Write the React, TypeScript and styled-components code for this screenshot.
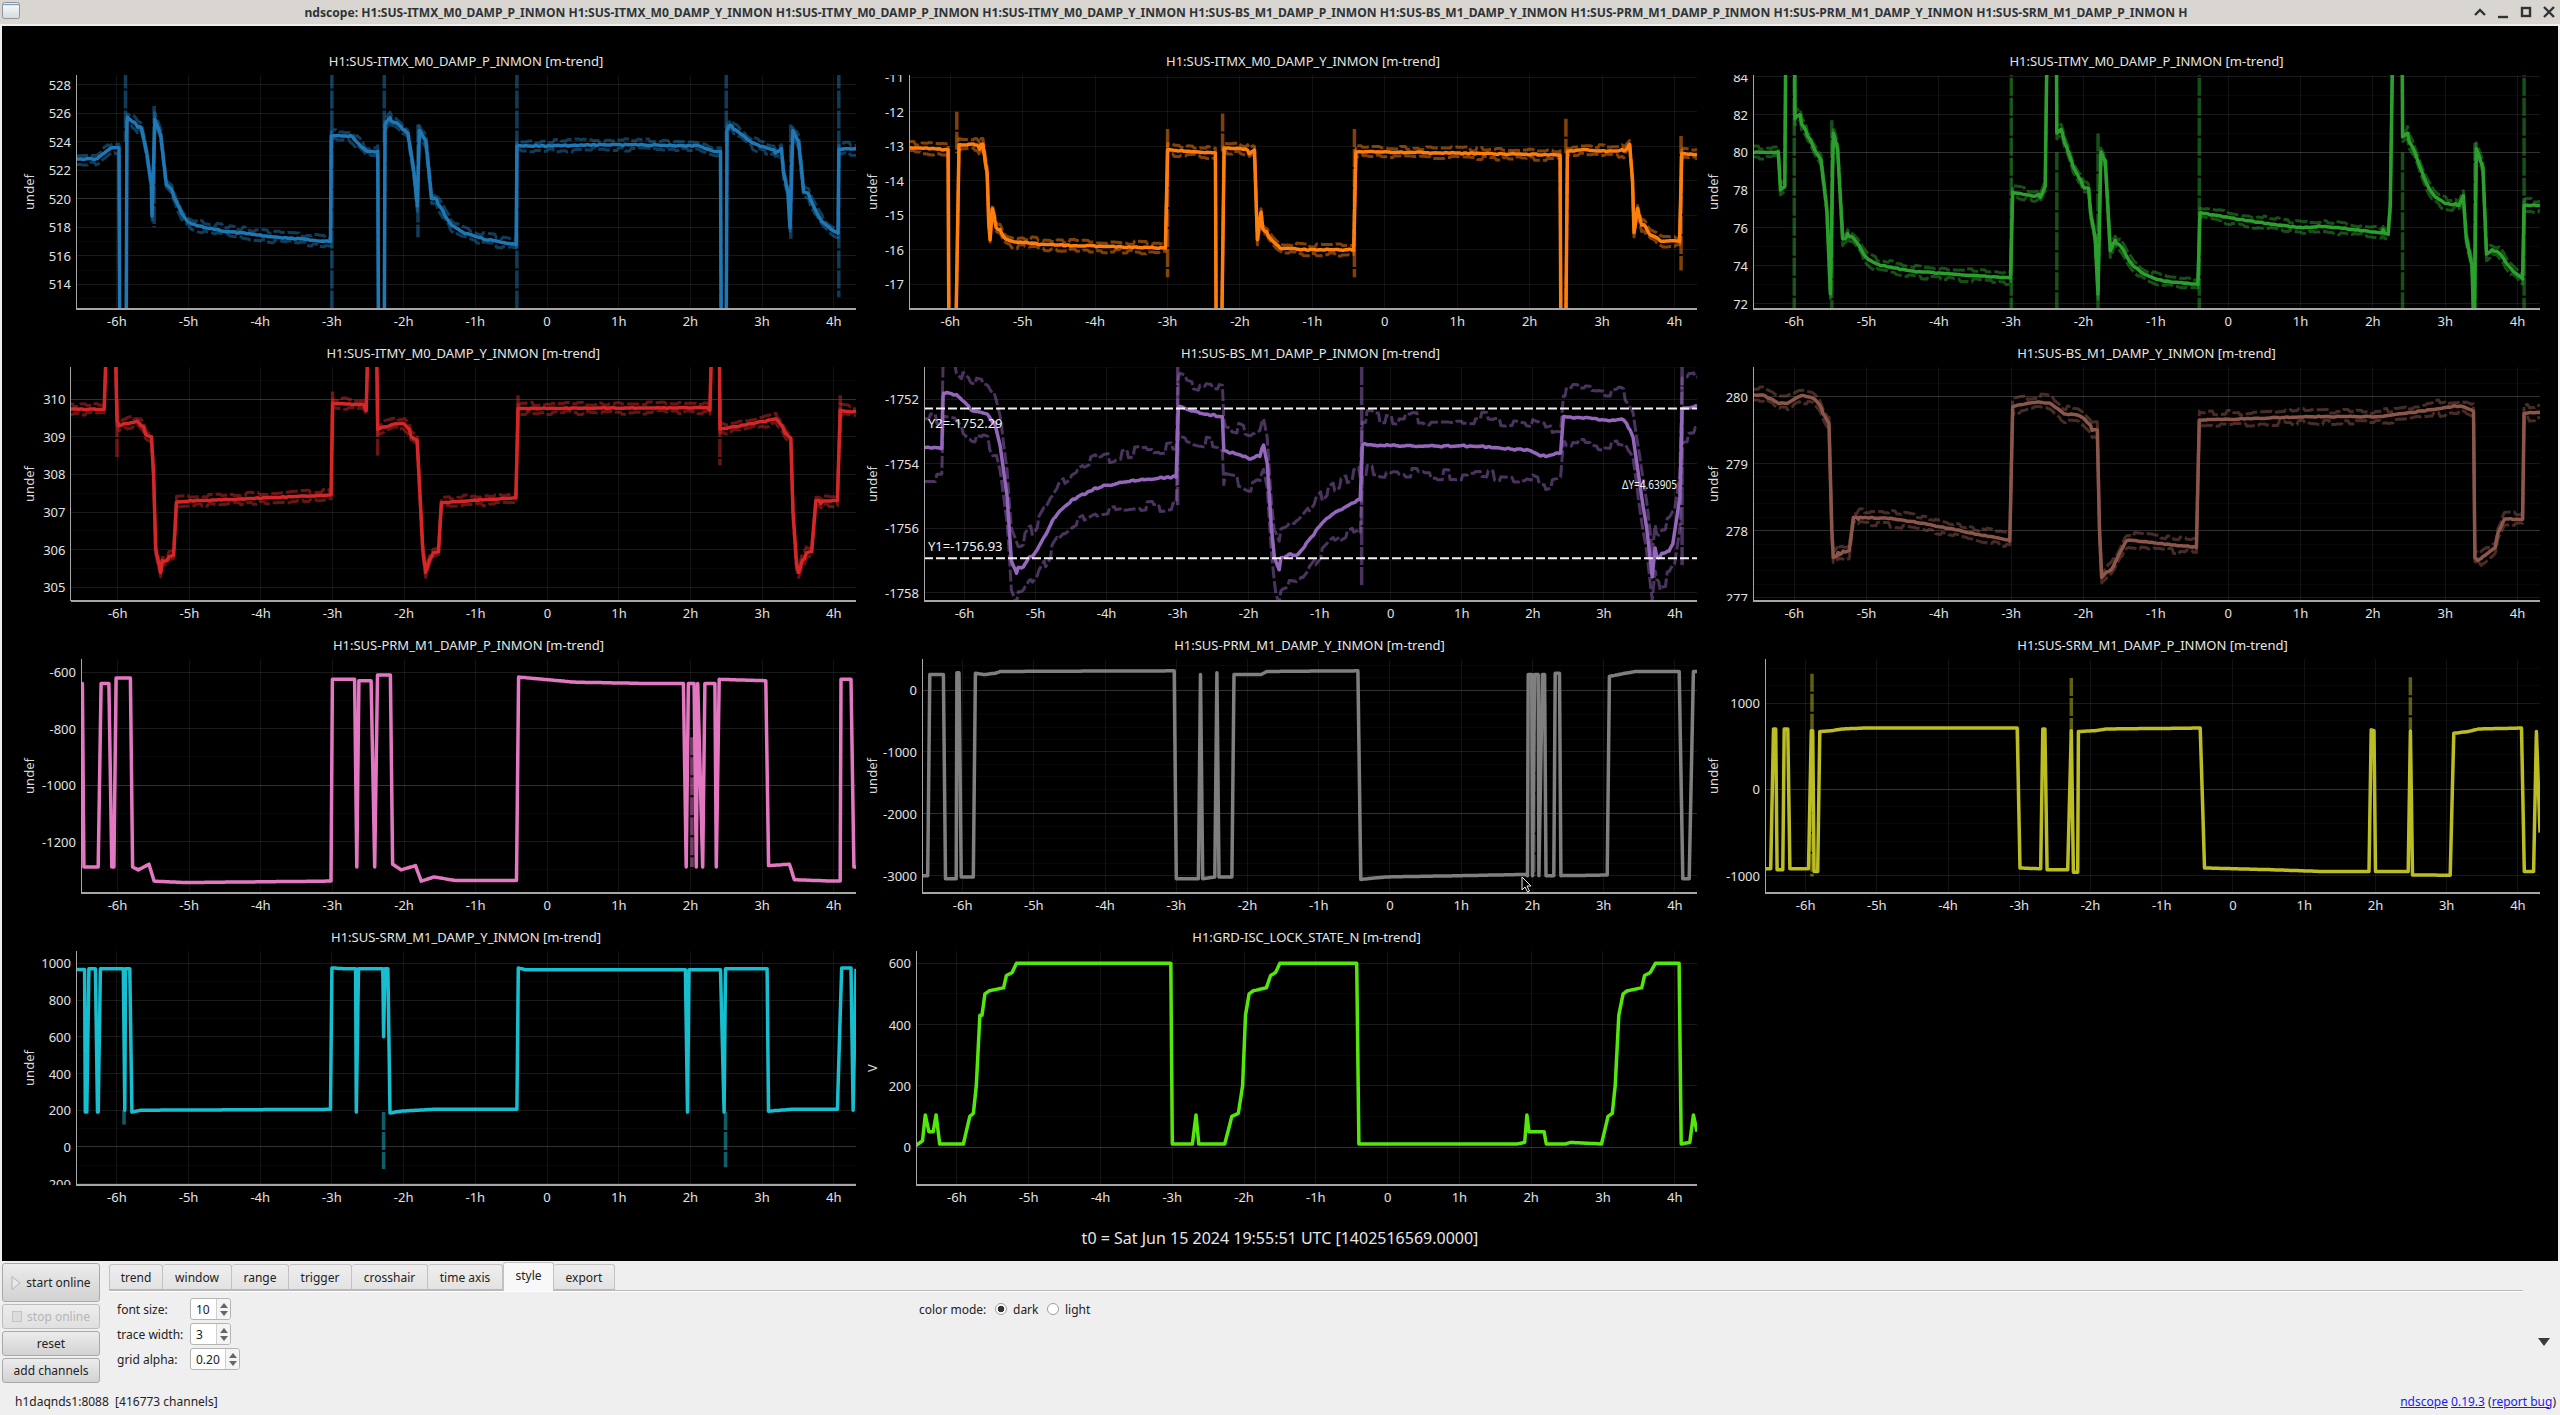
import React, { useMemo } from "react";
import styled, { createGlobalStyle } from "styled-components";

const FONT = `"Noto Sans", "DejaVu Sans", sans-serif`;
const T_MIN = -6.57;
const T_MAX = 4.31;
const PLOT_H = 234;
const CHART_H = 268;

const GlobalStyle = createGlobalStyle`
  html, body { margin: 0; padding: 0; background: #efefef; overflow: hidden; }
  body { font-family: ${FONT}; font-size: 12px; }
`;

type Spike = [number, number, number];
interface PlotConfig {
  title: string;
  color: string;
  axisLeft: number;
  tMin?: number;
  domain: [number, number];
  ticks: number[];
  minor?: number;
  strong?: number[];
  ylabel?: string;
  band?: number;
  noise?: number;
  bandNoise?: number;
  key: number[];
  spikes?: Spike[];
  crosshair?: boolean;
  cursor?: [number, number];
}

const PLOTS: PlotConfig[] = [
  {
    title: "H1:SUS-ITMX_M0_DAMP_P_INMON [m-trend]", color: "#1f77b4", axisLeft: 61, domain: [512.27, 528.68],
    ticks: [528, 526, 524, 522, 520, 518, 516, 514], minor: 1, strong: [520], band: 0.33, noise: 0.07, bandNoise: 0.28,
    key: [-6.57,522.8,-6.2,522.8,-6.15,523.6,-5.97,523.6,-5.96,510,-5.87,510,-5.86,525.3,-5.85,525.7,-5.66,525,-5.58,523.1,-5.52,521,-5.51,518.8,-5.47,525.6,-5.39,524.5,-5.31,521,-5.21,520.6,-5.12,518.9,-4.97,518.2,-4.58,517.8,-3.97,517.4,-3.02,517,-3.01,524.4,-2.65,524.4,-2.6,523.3,-2.36,523.3,-2.35,510,-2.27,510,-2.26,525.2,-2.19,525.7,-1.94,524.6,-1.86,522,-1.81,519.5,-1.78,524.8,-1.69,524,-1.61,520,-1.52,520,-1.41,518.5,-1.21,517.7,-0.91,517.2,-0.43,516.8,-0.42,523.7,0.015,523.7,0.93,523.8,2.19,523.7,2.25,523.3,2.42,523.3,2.43,510,2.5,510,2.51,524.8,2.56,525.2,2.85,523.9,3.23,523.3,3.27,523.5,3.3,521.8,3.36,520.5,3.39,518,3.43,524.8,3.51,524,3.58,520.5,3.67,520.3,3.76,518.8,3.91,518,4.06,517.6,4.07,523.5,4.31,523.5],
    spikes: [[-5.88,529,524],[-3.0,529,512],[-2.27,529,524],[-0.42,529,512],[2.5,529,524],[4.07,529,513.1],[-5.48,526.5,518],[-1.8,525.2,517.3],[3.4,525.2,517.2]],
  },
  {
    title: "H1:SUS-ITMX_M0_DAMP_Y_INMON [m-trend]", color: "#ff7f0e", axisLeft: 53, domain: [-17.72, -10.93],
    ticks: [-11, -12, -13, -14, -15, -16, -17], band: 0.13, noise: 0.03, bandNoise: 0.11,
    key: [-6.57,-13.03,-6.03,-13.1,-6.02,-18,-5.92,-18,-5.88,-12.95,-5.55,-12.95,-5.49,-13.8,-5.47,-15.2,-5.45,-15.7,-5.42,-14.8,-5.34,-15.5,-5.21,-15.7,-5.18,-15.9,-5.1,-15.75,-4.74,-15.85,-4.3,-15.88,-3.03,-15.95,-3,-13.1,-2.59,-13.15,-2.34,-13.2,-2.33,-18,-2.25,-18,-2.22,-13.05,-1.92,-13.05,-1.87,-13.2,-1.8,-13.1,-1.77,-15,-1.76,-15.7,-1.71,-14.9,-1.66,-15.5,-1.55,-15.7,-1.5,-16,-1.4,-15.95,-1.1,-16,-0.43,-16,-0.4,-13.15,2.42,-13.25,2.43,-18,2.5,-18,2.52,-13.15,2.67,-13.1,3.3,-13.15,3.38,-12.95,3.42,-14,3.44,-15.5,3.49,-14.8,3.57,-15.5,3.67,-15.4,3.73,-15.75,4.07,-15.75,4.1,-13.2,4.31,-13.25],
    spikes: [[-5.91,-12,-13.2],[-3,-12.5,-16.8],[-2.24,-12.05,-13.2],[-0.42,-12.5,-16.8],[2.5,-12.2,-13.2],[4.09,-12.7,-16.6]],
  },
  {
    title: "H1:SUS-ITMY_M0_DAMP_P_INMON [m-trend]", color: "#2ca02c", axisLeft: 56, domain: [71.71, 84.09],
    ticks: [84, 82, 80, 78, 76, 74, 72], minor: 1, strong: [80], band: 0.27, noise: 0.04, bandNoise: 0.2,
    key: [-6.57,80,-6.22,80,-6.19,78,-6.13,78.2,-6.11,90,-6,90,-5.99,81.8,-5.92,82,-5.79,80.6,-5.63,79.6,-5.55,77,-5.5,72.5,-5.46,81,-5.4,80.2,-5.33,75.4,-5.17,75.7,-5.06,74.6,-4.9,74.1,-4.37,73.7,-3.01,73.35,-2.98,77.9,-2.6,77.6,-2.53,78.2,-2.49,90,-2.38,90,-2.37,81,-2.31,81.2,-2.14,79.2,-1.99,78.1,-1.93,78.1,-1.9,76.7,-1.84,75.5,-1.8,72.5,-1.76,80,-1.7,79.5,-1.63,74.8,-1.54,75.6,-1.38,74.2,-1.15,73.5,-0.92,73.2,-0.42,73,-0.39,76.8,0.23,76.4,1,76,1.31,76.1,2.21,75.7,2.24,77.2,2.29,90,2.4,90,2.41,80.8,2.48,81,2.77,78,2.96,77.3,3.19,77.2,3.25,77.7,3.29,75.5,3.37,74,3.4,70,3.43,80.2,3.52,79.2,3.57,74.6,3.7,75,3.88,73.9,4.07,73.3,4.09,77.2,4.31,77.2],
    spikes: [[-6,85,71],[-3,85,71],[-2.37,80,71],[-1.8,81,71],[-0.4,85,71],[2.41,80,71],[4.09,85,71],[-5.48,81.7,71.6],[3.41,80.5,71]],
  },
  {
    title: "H1:SUS-ITMY_M0_DAMP_Y_INMON [m-trend]", color: "#d62728", axisLeft: 55.5, tMin: -6.66, domain: [304.64, 310.85],
    ticks: [310, 309, 308, 307, 306, 305], minor: 0.5, strong: [310], band: 0.12, noise: 0.02, bandNoise: 0.09,
    key: [-6.7,309.73,-6.19,309.73,-6.15,312,-6.04,312,-6.01,309.45,-5.98,309.3,-5.64,309.45,-5.61,309.05,-5.53,309,-5.5,308,-5.47,306,-5.4,305.4,-5.33,305.8,-5.22,305.85,-5.18,307.27,-4.93,307.3,-3.02,307.45,-3,309.88,-2.57,309.85,-2.53,309.7,-2.5,312,-2.39,312,-2.37,309.2,-2.22,309.3,-1.93,309.4,-1.9,309,-1.82,308.9,-1.78,307.5,-1.74,306,-1.7,305.4,-1.62,305.9,-1.52,305.95,-1.48,307.25,-1.1,307.3,-0.44,307.38,-0.41,309.75,2.23,309.77,2.27,309.7,2.3,312,2.4,312,2.41,309.2,2.58,309.25,3.28,309.5,3.32,309.1,3.4,308.95,3.43,307,3.48,305.6,3.51,305.4,3.59,305.9,3.69,305.95,3.75,307.3,4.05,307.3,4.09,309.7,4.31,309.65],
    spikes: [[-6.01,310,308.4],[-2.37,310,308.5],[2.41,310,308.25],[4.09,310.1,309],[-0.41,310.1,309],[-3,310.2,309]],
  },
  {
    title: "H1:SUS-BS_M1_DAMP_P_INMON [m-trend]", color: "#9467bd", axisLeft: 68, domain: [-1758.26, -1751], crosshair: true,
    ticks: [-1752, -1754, -1756, -1758], minor: 1, band: 0.85, noise: 0.05, bandNoise: 0.42,
    key: [-6.57,-1753.5,-6.32,-1753.5,-6.3,-1751.8,-6.02,-1751.9,-5.99,-1752.3,-5.6,-1752.5,-5.5,-1753.4,-5.4,-1755,-5.34,-1757,-5.22,-1757.7,-5.2,-1757,-5.07,-1757,-4.88,-1756.3,-4.7,-1755.5,-4.47,-1755.1,-4.09,-1754.7,-3.56,-1754.5,-3.02,-1754.4,-2.99,-1752.2,-2.73,-1752.4,-2.37,-1752.55,-2.35,-1753.6,-2.05,-1753.75,-1.92,-1754,-1.79,-1753.4,-1.74,-1754,-1.68,-1756,-1.64,-1756.9,-1.57,-1757.3,-1.5,-1756.6,-1.38,-1757,-1.19,-1756.5,-0.92,-1755.7,-0.7,-1755.4,-0.43,-1755.1,-0.4,-1753.4,0.21,-1753.45,1.26,-1753.45,2.02,-1753.6,2.09,-1753.8,2.39,-1753.65,2.43,-1752.55,2.85,-1752.6,3.11,-1752.7,3.3,-1752.55,3.41,-1753.2,3.53,-1755,3.6,-1756,3.68,-1757.5,3.72,-1756.6,3.84,-1757,3.97,-1756.5,4.07,-1755,4.1,-1752.3,4.31,-1752.2],
    spikes: [[-3,-1751,-1755.3],[-0.41,-1751,-1757.8],[4.1,-1751,-1757.2]],
  },
  {
    title: "H1:SUS-BS_M1_DAMP_Y_INMON [m-trend]", color: "#8c564b", axisLeft: 56, domain: [276.95, 280.44],
    ticks: [280, 279, 278, 277], minor: 0.2, strong: [280, 278], band: 0.09, noise: 0.012, bandNoise: 0.08,
    key: [-6.57,280.02,-6.33,280.02,-6.3,279.9,-6,279.9,-5.98,280.05,-5.81,280,-5.79,279.95,-5.67,280,-5.6,279.75,-5.52,279.6,-5.48,278,-5.46,277.6,-5.35,277.65,-5.24,277.7,-5.18,278.2,-4.65,278.18,-4.27,278.12,-3.02,277.85,-2.98,279.85,-2.68,279.92,-2.38,279.9,-2.36,279.75,-2,279.72,-1.88,279.5,-1.81,279.5,-1.78,278,-1.75,277.3,-1.66,277.4,-1.54,277.45,-1.47,277.87,-0.44,277.75,-0.4,279.65,0.28,279.67,1.04,279.7,2.1,279.7,2.93,279.82,3.2,279.87,3.39,279.78,3.41,277.6,3.45,277.55,3.69,277.75,3.73,278.17,4.07,278.17,4.09,279.75,4.31,279.77],
  },
  {
    title: "H1:SUS-PRM_M1_DAMP_P_INMON [m-trend]", color: "#e377c2", axisLeft: 66, tMin: -6.51, domain: [-1382, -553],
    ticks: [-600, -800, -1000, -1200], minor: 100, strong: [-1000],
    key: [-6.57,-640,-6.49,-640,-6.47,-1290,-6.27,-1290,-6.23,-640,-6.12,-640,-6.08,-1290,-6.05,-1290,-6.02,-620,-5.82,-620,-5.79,-1290,-5.71,-1300,-5.56,-1280,-5.49,-1340,-5.06,-1345,-3.09,-1340,-3.02,-1340,-3,-625,-2.69,-625,-2.66,-1290,-2.63,-630,-2.46,-630,-2.41,-1290,-2.37,-610,-2.19,-610,-2.16,-1280,-2.04,-1300,-1.84,-1285,-1.76,-1340,-1.58,-1325,-1.28,-1338,-0.43,-1338,-0.4,-617,0.38,-635,1.44,-640,1.9,-640,1.94,-1290,1.97,-640,2.05,-640,2.08,-1290,2.1,-640,2.17,-1290,2.2,-640,2.34,-640,2.36,-1290,2.4,-625,3.05,-630,3.09,-1285,3.38,-1280,3.45,-1335,4.01,-1340,4.09,-1340,4.1,-625,4.24,-625,4.28,-1290,4.31,-1290],
    spikes: [[2.02,-830,-1290]],
  },
  {
    title: "H1:SUS-PRM_M1_DAMP_Y_INMON [m-trend]", color: "#7f7f7f", axisLeft: 66, domain: [-3280, 501],
    ticks: [0, -1000, -2000, -3000], minor: 200, strong: [0, -2000], cursor: [666, 218],
    key: [-6.57,-3000,-6.49,-3000,-6.46,250,-6.27,250,-6.24,-3050,-6.09,-3050,-6.08,280,-6.05,280,-6.02,-3020,-5.85,-3020,-5.82,270,-5.7,250,-5.54,270,-5.47,300,-3.03,310,-3,-3050,-2.69,-3050,-2.66,250,-2.63,-3050,-2.46,-3020,-2.43,280,-2.4,-3020,-2.22,-3020,-2.19,250,-1.81,250,-1.73,300,-0.45,310,-0.41,-3060,-0.05,-3020,1.01,-3000,1.9,-2980,1.93,-3000,1.94,250,1.99,250,2.0,-3000,2.03,250,2.08,250,2.09,-3000,2.14,250,2.17,250,2.19,-3000,2.3,-3000,2.32,270,2.38,270,2.4,-3000,3.05,-2990,3.08,220,3.3,270,3.45,300,4.06,300,4.11,-3050,4.2,-3050,4.26,300,4.31,300],
    spikes: [[2.02,250,-3000]],
  },
  {
    title: "H1:SUS-SRM_M1_DAMP_P_INMON [m-trend]", color: "#bcbd22", axisLeft: 68, domain: [-1200, 1510],
    ticks: [1000, 0, -1000], minor: 200, strong: [0],
    key: [-6.57,-920,-6.49,-920,-6.45,700,-6.42,700,-6.4,-930,-6.32,-930,-6.3,700,-6.25,700,-6.22,-920,-5.96,-920,-5.92,680,-5.9,680,-5.88,-950,-5.83,-950,-5.8,670,-5.63,680,-5.48,700,-5.17,710,-3.03,710,-2.99,-910,-2.7,-920,-2.67,700,-2.64,700,-2.61,-930,-2.32,-930,-2.27,680,-2.24,-960,-2.18,-960,-2.17,670,-1.94,680,-1.78,700,-0.46,710,-0.4,-910,0.53,-930,1.22,-950,1.91,-950,1.94,690,1.98,680,2,-950,2.46,-950,2.49,680,2.52,-990,3.05,-995,3.1,650,3.3,670,3.45,700,4.05,710,4.09,-950,4.22,-950,4.26,670,4.31,-500],
    spikes: [[-5.91,1340,-1010],[-2.27,1290,600],[2.49,1300,700]],
  },
  {
    title: "H1:SUS-SRM_M1_DAMP_Y_INMON [m-trend]", color: "#17becf", axisLeft: 61, domain: [-207, 1067],
    ticks: [1000, 800, 600, 400, 200, 0, -200], minor: 100, strong: [0],
    key: [-6.57,967,-6.45,967,-6.44,190,-6.42,190,-6.39,970,-6.3,970,-6.27,190,-6.26,190,-6.23,970,-5.91,970,-5.89,200,-5.88,970,-5.82,970,-5.79,190,-5.67,200,-3.02,205,-3,975,-2.82,970,-2.67,970,-2.66,190,-2.63,970,-2.29,970,-2.28,600,-2.26,970,-2.22,970,-2.19,185,-2.04,195,-1.59,205,-0.42,205,-0.4,975,-0.3,965,1.93,965,1.96,190,1.98,965,2.42,965,2.47,190,2.49,970,3.07,970,3.09,195,3.41,205,4.05,205,4.11,975,4.24,975,4.27,200,4.31,970],
    spikes: [[-5.9,200,122],[-2.28,190,-120],[2.49,190,-110]],
  },
  {
    title: "H1:GRD-ISC_LOCK_STATE_N [m-trend]", color: "#55e60a", axisLeft: 60, domain: [-124, 640], ylabel: "V",
    ticks: [600, 400, 200, 0], minor: 100, strong: [0],
    key: [-6.57,5,-6.48,20,-6.44,105,-6.39,50,-6.33,50,-6.29,105,-6.24,10,-5.91,10,-5.82,100,-5.77,110,-5.73,200,-5.68,430,-5.65,430,-5.61,500,-5.55,510,-5.35,520,-5.31,560,-5.23,570,-5.17,600,-3.02,600,-3,10,-2.72,10,-2.67,105,-2.63,10,-2.27,10,-2.17,100,-2.08,110,-2.02,200,-1.98,430,-1.93,500,-1.87,510,-1.69,520,-1.63,560,-1.56,570,-1.5,600,-0.43,600,-0.4,10,1.8,10,1.91,15,1.94,105,1.97,50,2.18,50,2.21,10,2.48,10,2.55,15,2.98,10,3.07,100,3.13,110,3.17,200,3.22,430,3.28,500,3.34,510,3.54,520,3.58,560,3.66,570,3.73,600,4.06,600,4.09,10,4.21,15,4.26,105,4.31,50],
  },
];

const CELL_W = [841, 841, 843];
const Y_LABEL_X = [14, 16, 16];

function makeRandom(seed: number) {
  let s = seed >>> 0;
  return () => {
    s = (s * 1664525 + 1013904223) >>> 0;
    return s / 4294967296;
  };
}

function buildTrace(p: PlotConfig, seed: number) {
  const rnd = makeRandom(seed);
  const band = p.band ?? 0;
  const noise = p.noise ?? 0;
  const bandNoise = p.bandNoise ?? 0;
  const base: [number, number][] = [];
  for (let i = 0; i + 3 < p.key.length; i += 2) {
    const [t1, y1, t2, y2] = [p.key[i], p.key[i + 1], p.key[i + 2], p.key[i + 3]];
    const n = Math.max(1, Math.floor((t2 - t1) / 0.022));
    for (let j = 0; j < n; j++) base.push([t1 + ((t2 - t1) * j) / n, y1 + ((y2 - y1) * j) / n]);
  }
  base.push([p.key[p.key.length - 2], p.key[p.key.length - 1]]);
  const range = p.domain[1] - p.domain[0];
  const smooth = base.map(([t, y], i) => {
    if (band === 0) return [t, y] as [number, number];
    const win = base.slice(Math.max(0, i - 4), i + 5).map((b) => b[1]);
    const spread = Math.max(...win) - Math.min(...win);
    if (spread > range * 0.14) return [t, y] as [number, number];
    return [t, win.reduce((a, b) => a + b, 0) / win.length] as [number, number];
  });
  const mean: [number, number][] = [];
  const hi: [number, number][] = [];
  const lo: [number, number][] = [];
  let hiN = 0, loN = 0, mN = 0;
  smooth.forEach(([t, y], i) => {
    if (i % 2 === 0) mN = noise * (rnd() - 0.5);
    if (i % 4 === 0) { hiN = bandNoise * (rnd() - 0.5); loN = bandNoise * (rnd() - 0.5); }
    mean.push([t, y + mN]);
    hi.push([t, y + band + hiN]);
    lo.push([t, y - band + loN]);
  });
  return { mean, hi, lo };
}

const Page = styled.div`
  width: 2560px;
  height: 1415px;
  display: flex;
  flex-direction: column;
  background: #efefef;
  color: #222;
  overflow: hidden;
`;

const TitleBar = styled.header`
  height: 24px;
  flex: none;
  display: flex;
  align-items: center;
  background: #d9d6d2;
`;

const AppIcon = styled.svg`
  width: 24px;
  height: 24px;
  flex: none;
`;

const WindowTitle = styled.div`
  flex: 1;
  min-width: 0;
  text-align: center;
  white-space: nowrap;
  overflow: hidden;
  font-weight: 700;
  font-size: 12.1px;
  color: #2e3436;
`;

const WindowButtons = styled.div`
  flex: none;
  width: 92px;
  display: flex;
  align-items: center;
  gap: 7px;
  padding-left: 4px;
  box-sizing: border-box;
`;

const WindowGlyph = styled.svg`
  width: 16px;
  height: 16px;
  fill: none;
  stroke: #2e3436;
  stroke-width: 2.4;
`;

const Canvas = styled.main`
  flex: none;
  height: 1235px;
  margin: 2px 2px 0;
  background: #000;
  display: flex;
  flex-direction: column;
`;

const PlotGrid = styled.div`
  display: grid;
  grid-template-columns: ${CELL_W.map((w) => `${w}px`).join(" ")};
  grid-auto-rows: 292px;
  padding: 25px 0 0 13px;
`;

const PlotCell = styled.section`
  display: flex;
  flex-direction: column;
`;

const PlotTitle = styled.div<{ $left: number }>`
  height: 24px;
  flex: none;
  padding-left: ${(p) => p.$left}px;
  padding-bottom: 5px;
  box-sizing: border-box;
  display: flex;
  align-items: center;
  justify-content: center;
  font-size: 13px;
  color: #e6e6e6;
  white-space: nowrap;
`;

const ChartSvg = styled.svg`
  display: block;
  font-family: ${FONT};
  font-size: 13px;
`;

const TimeOrigin = styled.div`
  height: 38px;
  display: flex;
  align-items: center;
  justify-content: center;
  font-size: 16px;
  color: #e6e6e6;
`;

const ControlPanel = styled.footer`
  flex: 1;
  display: flex;
  flex-direction: column;
  min-height: 0;
`;

const TopRow = styled.div`
  height: 126px;
  flex: none;
  display: flex;
`;

const ActionColumn = styled.div`
  width: 98px;
  flex: none;
  margin-left: 2px;
  padding-top: 2px;
  display: flex;
  flex-direction: column;
  gap: 2px;
`;

const ActionButton = styled.button<{ $tall?: boolean }>`
  height: ${(p) => (p.$tall ? 39 : 25)}px;
  margin: 0;
  padding: 0;
  display: flex;
  align-items: center;
  justify-content: center;
  gap: 5px;
  font-family: ${FONT};
  font-size: 12px;
  color: #222;
  background: linear-gradient(#ececec, #d2d2d2);
  border: 1px solid #a9a9a9;
  border-radius: 3px;
  &:disabled {
    color: #b6b6b6;
    background: linear-gradient(#ececec, #e0e0e0);
    border-color: #bdbdbd;
  }
`;

const PlayGlyph = styled.svg`
  width: 10px;
  height: 16px;
  flex: none;
  fill: #e8e8e8;
  stroke: #b4b4b4;
  stroke-width: 1;
`;

const StopGlyph = styled.span`
  width: 8px;
  height: 9px;
  background: #dcdcdc;
  border: 1px solid #c4c4c4;
`;

const TabArea = styled.div`
  flex: 1;
  margin-left: 9px;
  display: flex;
  flex-direction: column;
  min-width: 0;
`;

const TabBar = styled.div`
  height: 30px;
  flex: none;
  box-sizing: border-box;
  display: flex;
  align-items: flex-end;
  border-bottom: 1px solid #b9b9b9;
  box-shadow: 0 1px 0 #fff;
`;

const Tab = styled.div<{ $active?: boolean; $width: number }>`
  width: ${(p) => p.$width}px;
  flex: none;
  height: ${(p) => (p.$active ? 29 : 26)}px;
  box-sizing: border-box;
  margin-bottom: ${(p) => (p.$active ? -1 : 0)}px;
  display: flex;
  align-items: center;
  justify-content: center;
  padding-bottom: ${(p) => (p.$active ? 3 : 0)}px;
  font-size: 12px;
  color: #222;
  background: ${(p) => (p.$active ? "#f8f8f8" : "linear-gradient(#eeeeee, #e2e2e2)")};
  border: 1px solid #c2c2c2;
  border-bottom: ${(p) => (p.$active ? "none" : "1px solid #b9b9b9")};
  border-left-width: ${(p) => (p.$active ? 1 : 0)}px;
  border-radius: 3px 3px 0 0;
  &:first-child { border-left-width: 1px; }
`;

const TabPage = styled.div`
  flex: 1;
  display: flex;
  padding: 7px 0 0 8px;
`;

const FormGrid = styled.div`
  width: 802px;
  flex: none;
  display: grid;
  grid-template-columns: 73px auto;
  grid-auto-rows: 22px;
  row-gap: 3px;
  align-items: center;
  justify-items: start;
  align-content: start;
`;

const SpinBox = styled.div<{ $width: number }>`
  width: ${(p) => p.$width}px;
  height: 22px;
  box-sizing: border-box;
  display: flex;
  background: #fff;
  border: 1px solid #b4b4b4;
  border-radius: 3px;
`;

const SpinValue = styled.span`
  flex: 1;
  padding-left: 5px;
  display: flex;
  align-items: center;
`;

const SpinArrows = styled.span`
  width: 13px;
  flex: none;
  background: #f4f4f4;
  border-left: 1px solid #d0d0d0;
  border-radius: 0 3px 3px 0;
  display: flex;
  flex-direction: column;
  align-items: center;
  justify-content: center;
  gap: 3px;
`;

const SpinArrow = styled.i<{ $down?: boolean }>`
  width: 0;
  height: 0;
  border-left: 4px solid transparent;
  border-right: 4px solid transparent;
  ${(p) => (p.$down ? "border-top: 5px solid #666;" : "border-bottom: 5px solid #666;")}
`;

const ColorMode = styled.div`
  height: 22px;
  display: flex;
  align-items: center;
`;

const ColorLabel = styled.span`
  width: 76px;
`;

const RadioOption = styled.label`
  width: 52px;
  display: flex;
  align-items: center;
  gap: 6px;
`;

const RadioDot = styled.span<{ $on?: boolean }>`
  width: 12px;
  height: 12px;
  box-sizing: border-box;
  border: 1px solid #a0a0a0;
  border-radius: 50%;
  background: ${(p) => (p.$on ? "radial-gradient(circle, #333 0 3px, #fff 3.6px)" : "#fff")};
`;

const CollapseColumn = styled.div`
  width: 37px;
  flex: none;
  padding: 77px 0 0 15px;
  box-sizing: border-box;
`;

const CollapseArrow = styled.div`
  width: 0;
  height: 0;
  border-left: 6px solid transparent;
  border-right: 6px solid transparent;
  border-top: 8px solid #3a3a3a;
`;

const StatusBar = styled.div`
  flex: 1;
  display: flex;
  align-items: center;
  justify-content: space-between;
  padding: 0 4px 0 15px;
  white-space: pre;
`;

const StatusLink = styled.a`
  color: #1a1aee;
  text-decoration: underline;
`;

const TABS: [string, number][] = [
  ["trend", 54], ["window", 69], ["range", 57], ["trigger", 63],
  ["crosshair", 76], ["time axis", 75], ["style", 51], ["export", 61],
];

function PlotChart({ plot, width, index, labelX }: { plot: PlotConfig; width: number; index: number; labelX: number }) {
  const { axisLeft: left, domain, color } = plot;
  const tMin = plot.tMin ?? T_MIN;
  const xOf = (t: number) => left + ((t - tMin) / (T_MAX - tMin)) * (width - left);
  const yOf = (v: number) => PLOT_H - ((v - domain[0]) / (domain[1] - domain[0])) * PLOT_H;
  const trace = useMemo(() => buildTrace(plot, 97 + index * 131), [plot, index]);
  const toPoints = (pts: [number, number][]) =>
    pts.map(([t, y]) => `${xOf(t).toFixed(1)},${yOf(y).toFixed(1)}`).join(" ");
  const hours = Array.from({ length: 11 }, (_, i) => i - 6);
  const minors: number[] = [];
  if (plot.minor) {
    const start = Math.ceil(domain[0] / plot.minor);
    for (let k = start; k * plot.minor <= domain[1]; k++) minors.push(k * plot.minor);
  }
  const clipId = `plot-clip-${index}`;
  const labelClipId = `label-clip-${index}`;
  const hasBand = (plot.band ?? 0) > 0;
  return (
    <ChartSvg width={width} height={CHART_H} viewBox={`0 0 ${width} ${CHART_H}`}>
      <defs>
        <clipPath id={clipId}><rect x={left} y={0} width={width - left} height={PLOT_H} /></clipPath>
        <clipPath id={labelClipId}><rect x={0} y={0} width={left} height={PLOT_H} /></clipPath>
      </defs>
      <g strokeWidth={1} shapeRendering="crispEdges">
        {minors.map((v) => (
          <line key={`m${v}`} x1={left} x2={width} y1={yOf(v)} y2={yOf(v)} stroke="#fff" strokeOpacity={0.03} />
        ))}
        {plot.ticks.map((v) => (
          <line key={v} x1={left} x2={width} y1={yOf(v)} y2={yOf(v)} stroke="#fff" strokeOpacity={plot.strong?.includes(v) ? 0.17 : 0.07} />
        ))}
        {hours.map((h) => (
          <line key={h} x1={xOf(h)} x2={xOf(h)} y1={0} y2={PLOT_H} stroke="#fff" strokeOpacity={0.07} />
        ))}
      </g>
      <g clipPath={`url(#${clipId})`} fill="none" strokeLinejoin="round">
        {hasBand && (
          <g stroke={color} strokeOpacity={0.5} strokeWidth={3} strokeDasharray="12 3">
            <polyline points={toPoints(trace.hi)} />
            <polyline points={toPoints(trace.lo)} />
          </g>
        )}
        {plot.spikes?.map(([t, a, b]) => (
          <line key={t} x1={xOf(t)} x2={xOf(t)} y1={yOf(a)} y2={yOf(b)} stroke={color} strokeOpacity={0.5} strokeWidth={3.5} strokeDasharray="18 2" />
        ))}
        <polyline points={toPoints(trace.mean)} stroke={color} strokeWidth={3.5} />
        {plot.crosshair && (
          <g stroke="#f2f2f2" strokeWidth={2} strokeDasharray="9 3">
            <line x1={left} x2={width} y1={yOf(-1752.29)} y2={yOf(-1752.29)} />
            <line x1={left} x2={width} y1={yOf(-1756.93)} y2={yOf(-1756.93)} />
          </g>
        )}
      </g>
      {plot.crosshair && (
        <g fill="#f2f2f2">
          <text x={72} y={yOf(-1752.29) + 19}>Y2=-1752.29</text>
          <text x={72} y={yOf(-1756.93) - 7}>Y1=-1756.93</text>
          <text x={766} y={122} textLength={55} lengthAdjust="spacingAndGlyphs">ΔY=4.63905</text>
        </g>
      )}
      <g stroke="#a6a6a6" strokeWidth={1} shapeRendering="crispEdges">
        <line x1={left} x2={left} y1={0} y2={PLOT_H} />
        <line x1={left} x2={width} y1={PLOT_H} y2={PLOT_H} strokeWidth={2} />
      </g>
      <g clipPath={`url(#${labelClipId})`} fill="#e2e2e2" textAnchor="end">
        {plot.ticks.map((v) => (
          <text key={v} x={left - 5} y={yOf(v) + 5}>{v}</text>
        ))}
      </g>
      <g fill="#e2e2e2" textAnchor="middle">
        {hours.map((h) => (
          <text key={h} x={xOf(h)} y={PLOT_H + 17}>{h === 0 ? "0" : `${h}h`}</text>
        ))}
      </g>
      <text
        transform={`translate(${labelX + 5} ${PLOT_H / 2}) rotate(-90)`}
        textAnchor="middle"
        fill="#d8d8d8"
      >
        {plot.ylabel ?? "undef"}
      </text>
      {plot.cursor && (
        <path
          transform={`translate(${plot.cursor[0]} ${plot.cursor[1]})`}
          d="M0 0 L0 13 L3 10 L5.5 15 L7.5 14 L5 9 L9 9 Z"
          fill="#000"
          stroke="#e8e8e8"
          strokeWidth={1}
        />
      )}
    </ChartSvg>
  );
}

function Spin({ value, width }: { value: string; width: number }) {
  return (
    <SpinBox $width={width}>
      <SpinValue>{value}</SpinValue>
      <SpinArrows>
        <SpinArrow />
        <SpinArrow $down />
      </SpinArrows>
    </SpinBox>
  );
}

export default function App() {
  return (
    <Page>
      <GlobalStyle />
      <TitleBar>
        <AppIcon viewBox="0 0 24 24">
          <defs>
            <linearGradient id="app-icon" x1="0" y1="0" x2="0" y2="1">
              <stop offset="0" stopColor="#fdfdfd" />
              <stop offset="1" stopColor="#d6dade" />
            </linearGradient>
          </defs>
          <rect x="2.5" y="2.5" width="17" height="16" rx="2" fill="url(#app-icon)" stroke="#8e959c" />
          <line x1="3" y1="4.5" x2="19" y2="4.5" stroke="#7f9fc4" strokeWidth="1.4" />
        </AppIcon>
        <WindowTitle>
          ndscope: H1:SUS-ITMX_M0_DAMP_P_INMON H1:SUS-ITMX_M0_DAMP_Y_INMON H1:SUS-ITMY_M0_DAMP_P_INMON H1:SUS-ITMY_M0_DAMP_Y_INMON H1:SUS-BS_M1_DAMP_P_INMON H1:SUS-BS_M1_DAMP_Y_INMON H1:SUS-PRM_M1_DAMP_P_INMON H1:SUS-PRM_M1_DAMP_Y_INMON H1:SUS-SRM_M1_DAMP_P_INMON H
        </WindowTitle>
        <WindowButtons>
          <WindowGlyph viewBox="0 0 16 16"><path d="M3 11 L8 6 L13 11" /></WindowGlyph>
          <WindowGlyph viewBox="0 0 16 16"><path d="M3 13 H13" /></WindowGlyph>
          <WindowGlyph viewBox="0 0 16 16"><rect x="4" y="4" width="8" height="8" /></WindowGlyph>
          <WindowGlyph viewBox="0 0 16 16"><path d="M3 3 L13 13 M13 3 L3 13" /></WindowGlyph>
        </WindowButtons>
      </TitleBar>
      <Canvas>
        <PlotGrid>
          {PLOTS.map((plot, i) => (
            <PlotCell key={plot.title}>
              <PlotTitle $left={plot.axisLeft}>{plot.title}</PlotTitle>
              <PlotChart plot={plot} index={i} width={CELL_W[i % 3]} labelX={Y_LABEL_X[i % 3]} />
            </PlotCell>
          ))}
        </PlotGrid>
        <TimeOrigin>t0 = Sat Jun 15 2024 19:55:51 UTC [1402516569.0000]</TimeOrigin>
      </Canvas>
      <ControlPanel>
        <TopRow>
          <ActionColumn>
            <ActionButton $tall>
              <PlayGlyph viewBox="0 0 10 16"><path d="M1 1.5 L9 8 L1 14.5 Z" /></PlayGlyph>
              start online
            </ActionButton>
            <ActionButton disabled><StopGlyph />stop online</ActionButton>
            <ActionButton>reset</ActionButton>
            <ActionButton>add channels</ActionButton>
          </ActionColumn>
          <TabArea>
            <TabBar>
              {TABS.map(([name, w]) => (
                <Tab key={name} $width={w} $active={name === "style"}>{name}</Tab>
              ))}
            </TabBar>
            <TabPage>
              <FormGrid>
                <span>font size:</span>
                <Spin value="10" width={41} />
                <span>trace width:</span>
                <Spin value="3" width={41} />
                <span>grid alpha:</span>
                <Spin value="0.20" width={50} />
              </FormGrid>
              <ColorMode>
                <ColorLabel>color mode:</ColorLabel>
                <RadioOption><RadioDot $on />dark</RadioOption>
                <RadioOption><RadioDot />light</RadioOption>
              </ColorMode>
            </TabPage>
          </TabArea>
          <CollapseColumn><CollapseArrow /></CollapseColumn>
        </TopRow>
        <StatusBar>
          <span>h1daqnds1:8088  [416773 channels]</span>
          <span>
            <StatusLink>ndscope</StatusLink> <StatusLink>0.19.3</StatusLink> (<StatusLink>report bug</StatusLink>)
          </span>
        </StatusBar>
      </ControlPanel>
    </Page>
  );
}
